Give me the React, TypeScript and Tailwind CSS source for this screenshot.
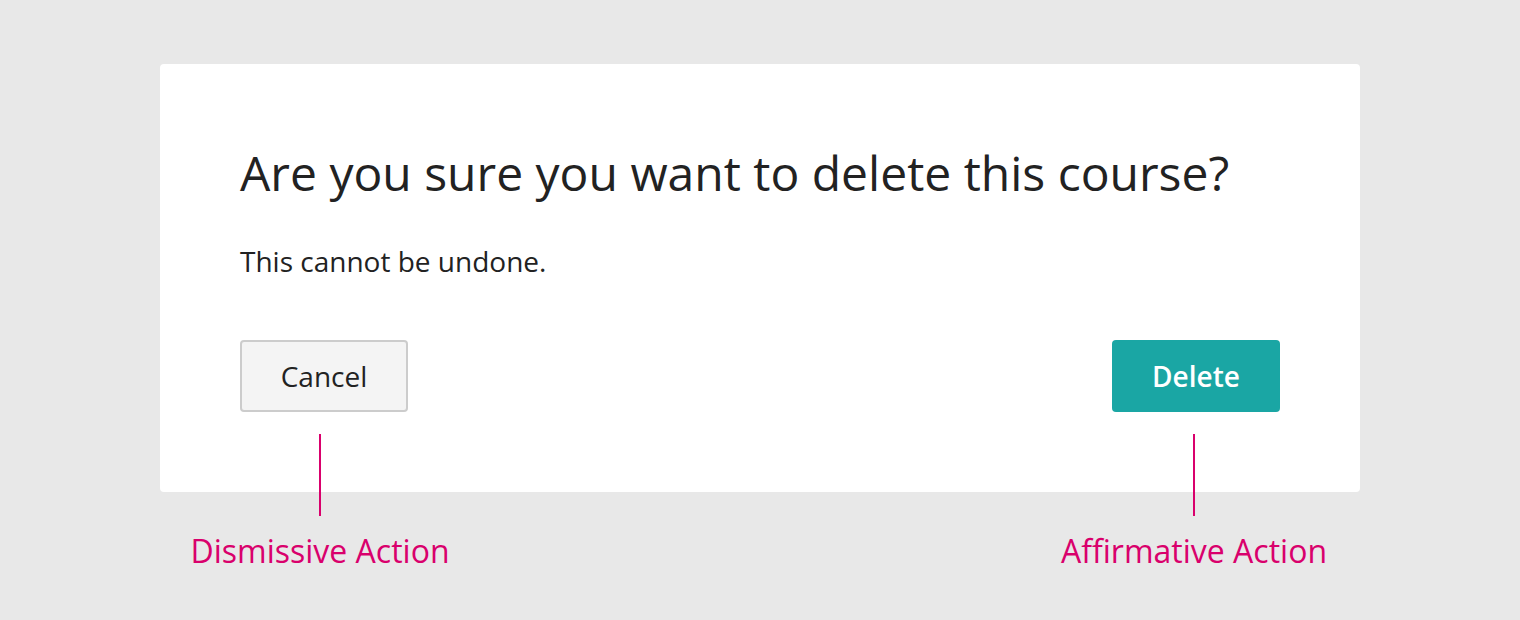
import React from "react";

const font = { fontFamily: '"Open Sans", "Noto Sans", sans-serif' };

function Annotation({ label }: { label: string }) {
  return (
    <div className="flex w-[168px] flex-col items-center">
      <div className="h-[82px] w-[2px] bg-[#d9006c]" />
      <span className="mt-[15px] whitespace-nowrap text-[32px] leading-[40px] text-[#d9006c]">
        {label}
      </span>
    </div>
  );
}

export default function App() {
  return (
    <div
      className="h-[620px] w-[1520px] bg-[#e8e8e8] pt-[64px]"
      style={font}
    >
      <div className="mx-[160px] w-[1200px]">
        <div className="rounded-[4px] bg-white px-[80px] pb-[80px] pt-[77px]">
          <h1 className="text-[48px] leading-[64px] text-[#222]">
            Are you sure you want to delete this course?
          </h1>
          <p className="mt-[36px] text-[28px] leading-[40px] text-[#222]">
            This cannot be undone.
          </p>
          <div className="mt-[59px] flex justify-between">
            <button className="h-[72px] w-[168px] rounded-[4px] border-2 border-[#cccccc] bg-[#f4f4f4] text-[28px] text-[#222]">
              Cancel
            </button>
            <button className="h-[72px] w-[168px] rounded-[4px] bg-[#1aa6a4] text-[28px] font-semibold text-white">
              Delete
            </button>
          </div>
        </div>
        <div className="relative -mt-[58px] flex justify-between pl-[76px] pr-[82px]">
          <Annotation label="Dismissive Action" />
          <Annotation label="Affirmative Action" />
        </div>
      </div>
    </div>
  );
}
